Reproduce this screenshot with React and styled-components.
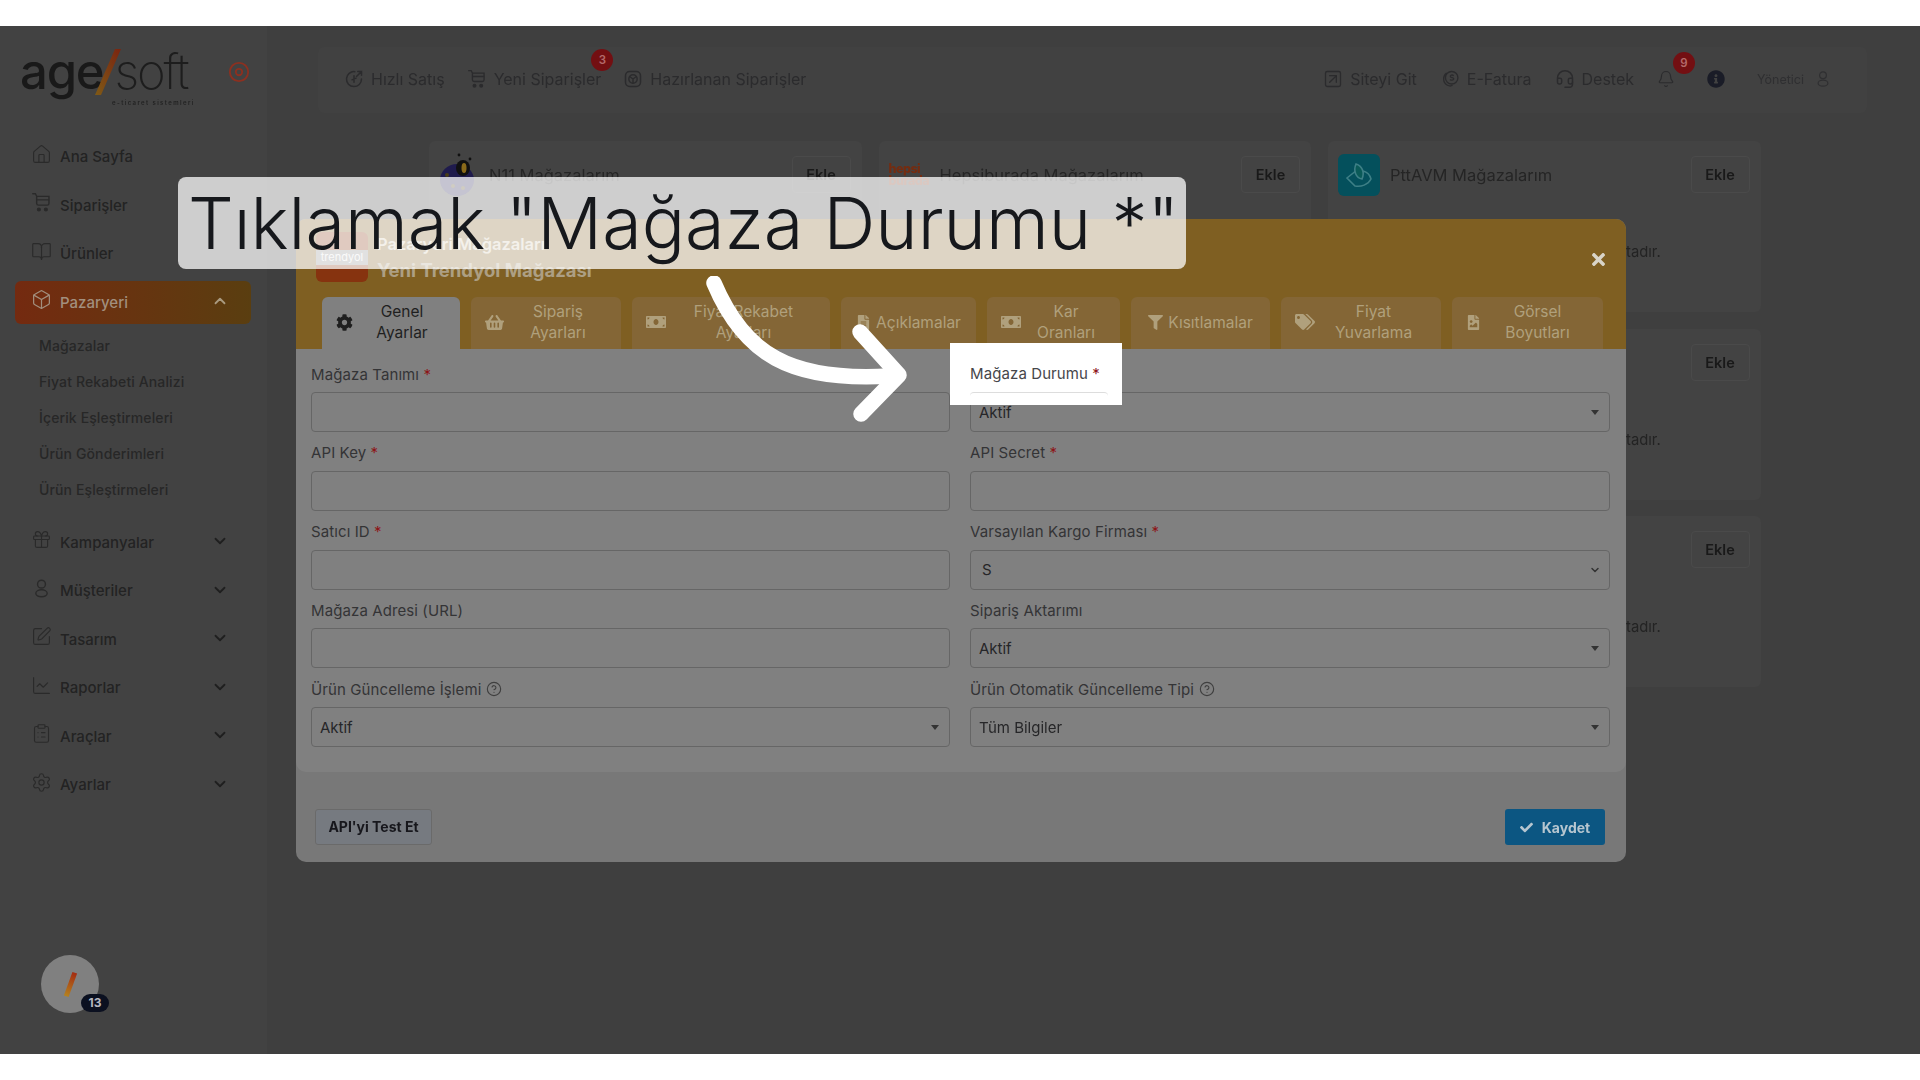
import React from 'react';
import styled, { createGlobalStyle } from 'styled-components';
import {
  House, BookOpen, Box, Gift, SquarePen, ChartLine, ClipboardList, Settings,
  ChevronDown, ChevronUp, SquareArrowUpRight, Headset, Bell, CircleHelp,
} from 'lucide-react';
import {
  FaCog, FaShoppingBasket, FaMoneyBill, FaFileAlt, FaFilter, FaTags,
  FaFileImage, FaCheck, FaTimes, FaInfoCircle,
} from 'react-icons/fa';

const CartIcon = ({ size = 20 }) => (
  <svg width={size} height={size} viewBox="0 0 24 24" fill="none" stroke="currentColor" strokeWidth="1.6" strokeLinecap="round">
    <path d="M2 2h3l1.5 3h14v8a2 2 0 0 1-2 2H8.5a2 2 0 0 1-2-2V5" />
    <path d="M7 9h13" />
    <circle cx="9" cy="20" r="1.6" fill="currentColor" />
    <circle cx="17" cy="20" r="1.6" fill="currentColor" />
  </svg>
);

const QuickIcon = () => (
  <svg width="20" height="20" viewBox="0 0 24 24" fill="none" stroke="currentColor" strokeWidth="1.8" strokeLinecap="round">
    <path d="M13 3.2A9 9 0 1 0 21 12" />
    <path d="M15 9l6-6M16.5 3H21v4.5" />
    <path d="M12 8v8M9.5 13l5-2" />
  </svg>
);

const PreparedIcon = () => (
  <svg width="20" height="20" viewBox="0 0 24 24" fill="none" stroke="currentColor" strokeWidth="1.8">
    <rect x="3" y="3" width="18" height="18" rx="5" />
    <circle cx="12" cy="12" r="5" />
    <path d="M12 12v5M12 12l-4-3M12 12l4-3" />
  </svg>
);

const InvoiceIcon = () => (
  <svg width="20" height="20" viewBox="0 0 24 24" fill="none" stroke="currentColor" strokeWidth="1.6">
    <circle cx="14" cy="10.5" r="7.5" />
    <path d="M8 5a8.5 8.5 0 0 0 1 14.5c2 1 4.500 1 6 0" />
    <path d="M16.500 8c-2-1.500-4.500-.5-4 1.200.5 1.500 4 .8 4 2.600 0 1.700-3 2-4.500.7" />
  </svg>
);

const PersonIcon = ({ size = 20 }) => (
  <svg width={size} height={size} viewBox="0 0 24 24" fill="none" stroke="currentColor" strokeWidth="1.6">
    <circle cx="12" cy="7" r="4.500" />
    <ellipse cx="12" cy="17.500" rx="6.500" ry="4" />
  </svg>
);

const TargetIcon = () => (
  <svg width="22" height="22" viewBox="0 0 24 24" fill="none" stroke="#8c3020" strokeWidth="2">
    <circle cx="12" cy="12" r="10" />
    <circle cx="12" cy="12" r="3.500" />
  </svg>
);

const BugLogo = () => (
  <svg width="40" height="44" viewBox="0 0 40 44">
    <ellipse cx="18" cy="27" rx="17" ry="16" fill="#1f1b4d" />
    <ellipse cx="24" cy="15" rx="7" ry="8" fill="#111" />
    <ellipse cx="25" cy="15" rx="2.500" ry="5" fill="#8a6a1a" />
    <circle cx="20" cy="2" r="1.400" fill="#111" />
    <circle cx="31" cy="6" r="1.400" fill="#111" />
    <circle cx="8" cy="22" r="2" fill="#4a3d16" />
    <circle cx="14" cy="33" r="2" fill="#4a3d16" />
    <circle cx="24" cy="35" r="2" fill="#4a3d16" />
  </svg>
);

const PttLogo = () => (
  <svg width="30" height="26" viewBox="0 0 30 26" fill="none" stroke="#3d7f86" strokeWidth="1.600">
    <path d="M13 8L3 16l8 8c6 1 13-1 16-7-1-4-4-7-8-8" />
    <path d="M12 2c6 2 9 8 6 15-6-1-9-8-6-15z" fill="#0a5a58" />
  </svg>
);

const menuTop = [
  { label: 'Ana Sayfa', icon: <House size={21} strokeWidth={1.3} /> },
  { label: 'Siparişler', icon: <CartIcon size={21} /> },
  { label: 'Ürünler', icon: <BookOpen size={21} strokeWidth={1.3} /> },
];

const subMenu = ['Mağazalar', 'Fiyat Rekabeti Analizi', 'İçerik Eşleştirmeleri', 'Ürün Gönderimleri', 'Ürün Eşleştirmeleri'];

const menuBottom = [
  { label: 'Kampanyalar', icon: <Gift size={21} strokeWidth={1.3} /> },
  { label: 'Müşteriler', icon: <PersonIcon size={21} /> },
  { label: 'Tasarım', icon: <SquarePen size={21} strokeWidth={1.3} /> },
  { label: 'Raporlar', icon: <ChartLine size={21} strokeWidth={1.3} /> },
  { label: 'Araçlar', icon: <ClipboardList size={21} strokeWidth={1.3} /> },
  { label: 'Ayarlar', icon: <Settings size={21} strokeWidth={1.3} /> },
];

const tabs = [
  { lines: ['Genel', 'Ayarlar'], icon: <FaCog size={17} />, width: 138, active: true },
  { lines: ['Sipariş', 'Ayarları'], icon: <FaShoppingBasket size={19} />, width: 150 },
  { lines: ['Fiyat Rekabet', 'Ayarları'], icon: <FaMoneyBill size={20} />, width: 198 },
  { lines: ['Açıklamalar'], icon: <FaFileAlt size={15} />, width: 135 },
  { lines: ['Kar', 'Oranları'], icon: <FaMoneyBill size={20} />, width: 133 },
  { lines: ['Kısıtlamalar'], icon: <FaFilter size={15} />, width: 139 },
  { lines: ['Fiyat', 'Yuvarlama'], icon: <FaTags size={20} />, width: 160 },
  { lines: ['Görsel', 'Boyutları'], icon: <FaFileImage size={15} />, width: 151 },
];

const fields = [
  { label: 'Mağaza Tanımı', required: true },
  { label: 'Mağaza Durumu', required: true, value: 'Aktif' },
  { label: 'API Key', required: true },
  { label: 'API Secret', required: true },
  { label: 'Satıcı ID', required: true },
  { label: 'Varsayılan Kargo Firması', required: true, value: 'S', chevron: true },
  { label: 'Mağaza Adresi (URL)' },
  { label: 'Sipariş Aktarımı', value: 'Aktif' },
  { label: 'Ürün Güncelleme İşlemi', help: true, value: 'Aktif' },
  { label: 'Ürün Otomatik Güncelleme Tipi', help: true, value: 'Tüm Bilgiler' },
];

const App = () => (
  <>
    <GlobalStyle />
    <Page>
      <Band />
      <Screen>
        <Dimmed>
          <Sidebar>
            <LogoRow>
              <Logo>
                <LogoAge>age</LogoAge>
                <LogoSlash viewBox="0 0 26 46" width="26" height="46">
                  <defs>
                    <linearGradient id="slash" x1="1" y1="0" x2="0" y2="1">
                      <stop offset="0" stopColor="#7a2410" />
                      <stop offset="1" stopColor="#7f5a16" />
                    </linearGradient>
                  </defs>
                  <polygon points="20,0 26,0 6,46 0,46" fill="url(#slash)" />
                </LogoSlash>
                <LogoSoft>soft</LogoSoft>
                <LogoTag>e-ticaret sistemleri</LogoTag>
              </Logo>
              <TargetIcon />
            </LogoRow>
            <Menu>
              {menuTop.map((item) => (
                <MenuItem key={item.label}>
                  <MenuIcon>{item.icon}</MenuIcon>
                  <MenuLabel>{item.label}</MenuLabel>
                </MenuItem>
              ))}
              <MenuItem $active>
                <MenuIcon $active><Box size={21} strokeWidth={1.4} /></MenuIcon>
                <MenuLabel>Pazaryeri</MenuLabel>
                <MenuChevron $active><ChevronUp size={18} strokeWidth={2.4} /></MenuChevron>
              </MenuItem>
              <SubMenu>
                {subMenu.map((item) => <SubItem key={item}>{item}</SubItem>)}
              </SubMenu>
              {menuBottom.map((item) => (
                <MenuItem key={item.label}>
                  <MenuIcon>{item.icon}</MenuIcon>
                  <MenuLabel>{item.label}</MenuLabel>
                  <MenuChevron><ChevronDown size={18} strokeWidth={2.4} /></MenuChevron>
                </MenuItem>
              ))}
            </Menu>
          </Sidebar>

          <Main>
            <TopBar>
              <BarGroup>
                <BarLink><QuickIcon />Hızlı Satış</BarLink>
                <BarLink>
                  <CartIcon />Yeni Siparişler
                  <CountBadge $top={-20} $right={-12}>3</CountBadge>
                </BarLink>
                <BarLink><PreparedIcon />Hazırlanan Siparişler</BarLink>
              </BarGroup>
              <BarGroup>
                <BarLink><SquareArrowUpRight size={20} strokeWidth={1.6} />Siteyi Git</BarLink>
                <BarLink><InvoiceIcon />E-Fatura</BarLink>
                <BarLink><Headset size={20} strokeWidth={1.8} />Destek</BarLink>
                <BellWrap>
                  <Bell size={18} strokeWidth={1.6} />
                  <CountBadge $top={-18} $right={-20}>9</CountBadge>
                </BellWrap>
                <InfoWrap><FaInfoCircle size={18} /></InfoWrap>
                <UserBox>Yönetici <PersonIcon size={18} /></UserBox>
              </BarGroup>
            </TopBar>

            <CardGrid>
              <Card>
                <CardHead>
                  <BugLogo />
                  <CardTitle>N11 Mağazalarım</CardTitle>
                  <AddButton>Ekle</AddButton>
                </CardHead>
              </Card>
              <Card>
                <CardHead>
                  <HepsiLogo>hepsi<br />burada</HepsiLogo>
                  <CardTitle>Hepsiburada Mağazalarım</CardTitle>
                  <AddButton>Ekle</AddButton>
                </CardHead>
              </Card>
              <Card>
                <CardHead>
                  <PttBox><PttLogo /></PttBox>
                  <CardTitle>PttAVM Mağazalarım</CardTitle>
                  <AddButton>Ekle</AddButton>
                </CardHead>
                <CardNote>Henüz mağaza bulunmamaktadır.</CardNote>
              </Card>
              <Card />
              <Card />
              <Card>
                <CardHead>
                  <CardTitle />
                  <AddButton>Ekle</AddButton>
                </CardHead>
                <CardNote>Henüz mağaza bulunmamaktadır.</CardNote>
              </Card>
              <Card />
              <Card />
              <Card>
                <CardHead>
                  <CardTitle />
                  <AddButton>Ekle</AddButton>
                </CardHead>
                <CardNote>Henüz mağaza bulunmamaktadır.</CardNote>
              </Card>
            </CardGrid>
          </Main>

          <Widget>
            <WidgetSlash />
            <WidgetBadge>13</WidgetBadge>
          </Widget>

          <Modal>
            <ModalHeader>
              <TitleRow>
                <BrandBox><BrandStrip>trendyol</BrandStrip></BrandBox>
                <div>
                  <TitleSmall>Pazaryeri Mağazaları</TitleSmall>
                  <TitleBig>Yeni Trendyol Mağazası</TitleBig>
                </div>
              </TitleRow>
              <CloseButton><FaTimes size={19} /></CloseButton>
              <TabRow>
                {tabs.map((tab) => (
                  <Tab key={tab.lines[0]} $width={tab.width} $active={tab.active} $wide={tab.lines.length > 1}>
                    {tab.icon}
                    <TabText $wide={tab.lines.length > 1}>
                      {tab.lines.map((line) => <div key={line}>{line}</div>)}
                    </TabText>
                  </Tab>
                ))}
              </TabRow>
            </ModalHeader>

            <ModalBody>
              {fields.map((field) => (
                <Field key={field.label}>
                  <FieldLabel>
                    {field.label}
                    {field.required && <Star> *</Star>}
                    {field.help && <HelpMark><CircleHelp size={16} strokeWidth={1.7} /></HelpMark>}
                  </FieldLabel>
                  {field.value ? (
                    <SelectBox>
                      <SelectValue $indent={field.chevron}>{field.value}</SelectValue>
                      {field.chevron ? <ChevronDown size={12} strokeWidth={3} /> : <Caret />}
                    </SelectBox>
                  ) : (
                    <TextInput readOnly />
                  )}
                </Field>
              ))}
            </ModalBody>

            <ModalFooter>
              <TestButton>API'yi Test Et</TestButton>
              <SaveButton><FaCheck size={13} />Kaydet</SaveButton>
            </ModalFooter>
          </Modal>
        </Dimmed>

        <Callout>Tıklamak "Mağaza Durumu *"</Callout>

        <Spotlight>
          <SpotLabel>Mağaza Durumu<Star> *</Star></SpotLabel>
          <SpotEdge />
        </Spotlight>

        <ArrowMark viewBox="0 0 220 180" width="220" height="180">
          <path d="M14 7 C 44 78, 90 106, 190 100" />
          <path d="M160 56 L 199 99 L 161 138" />
        </ArrowMark>
      </Screen>
      <Band />
    </Page>
  </>
);

const GlobalStyle = createGlobalStyle`
  html, body {
    margin: 0;
    padding: 0;
    background: #fff;
  }
  * {
    box-sizing: border-box;
  }
`;

const Page = styled.div`
  width: 1920px;
  height: 1080px;
  display: flex;
  flex-direction: column;
  overflow: hidden;
  font-family: Inter, "Noto Sans", sans-serif;
`;

const Band = styled.div`
  height: 26px;
  flex-shrink: 0;
  background: #fff;
`;

const Screen = styled.div`
  position: relative;
  flex: 1;
  overflow: hidden;
  background: #3f3f3f;
`;

const Dimmed = styled.div`
  display: flex;
  height: 100%;
  filter: blur(0.55px);
`;

const Sidebar = styled.aside`
  width: 267px;
  flex-shrink: 0;
  background: #424242;
`;

const LogoRow = styled.div`
  display: flex;
  align-items: center;
  justify-content: space-between;
  height: 109px;
  padding: 0 17px 18px 20px;
  color: #111;
`;

const Logo = styled.div`
  position: relative;
  display: flex;
  align-items: baseline;
  height: 60px;
`;

const LogoAge = styled.span`
  font-size: 49px;
  font-weight: 500;
  letter-spacing: -1.2px;
  color: #191919;
`;

const LogoSlash = styled.svg`
  margin: 0 -7px 0 -8px;
  align-self: center;
`;

const LogoSoft = styled.span`
  font-size: 49px;
  font-weight: 200;
  letter-spacing: -2.2px;
  color: #1d1d1d;
`;

const LogoTag = styled.span`
  position: absolute;
  left: 92px;
  bottom: -4px;
  font-size: 6px;
  font-weight: 600;
  letter-spacing: 1.4px;
  color: #222;
  white-space: nowrap;
`;

const Menu = styled.nav`
  display: flex;
  flex-direction: column;
`;

const MenuItem = styled.div`
  display: flex;
  align-items: center;
  height: 43px;
  margin: 0 16px 5.5px 15px;
  padding: 0 22px 0 16px;
  border-radius: 6px;
  color: ${(props) => (props.$active ? '#a28f7e' : '#232323')};
  background: ${(props) => (props.$active ? 'linear-gradient(90deg, #742a10, #5a3e10)' : 'none')};
`;

const MenuIcon = styled.span`
  display: flex;
  width: 29px;
  margin-top: -5px;
  color: ${(props) => (props.$active ? '#a28f7e' : '#2a2a2a')};
`;

const MenuLabel = styled.span`
  flex: 1;
  font-size: 15px;
  font-weight: 500;
`;

const MenuChevron = styled.span`
  display: flex;
  margin-top: -2px;
  color: ${(props) => (props.$active ? '#a99a80' : '#1f1f1f')};
`;

const SubMenu = styled.div`
  display: flex;
  flex-direction: column;
  margin: -1.500px 0 13px;
`;

const SubItem = styled.div`
  height: 36px;
  line-height: 36px;
  padding-left: 39px;
  font-size: 14px;
  letter-spacing: 0.12px;
  font-weight: 500;
  color: #272727;
`;

const Main = styled.main`
  flex: 1;
  display: flex;
  flex-direction: column;
  padding: 21px 53px 0 51px;
`;

const TopBar = styled.header`
  display: flex;
  align-items: center;
  justify-content: space-between;
  height: 66px;
  padding: 0 35px 2px 26px;
  background: #414141;
  border-radius: 6px;
`;

const BarGroup = styled.div`
  display: flex;
  align-items: center;
  gap: 22px;

  & + & {
    gap: 23px;
  }
`;

const BarLink = styled.span`
  position: relative;
  display: flex;
  align-items: center;
  gap: 7px;
  font-size: 16px;
  color: #2b2b2d;
`;

const CountBadge = styled.span`
  position: absolute;
  top: ${(props) => props.$top}px;
  right: ${(props) => props.$right}px;
  width: 22px;
  height: 22px;
  line-height: 22px;
  text-align: center;
  border-radius: 50%;
  font-size: 11.500px;
  font-weight: 600;
  color: #b36a6a;
  background: #730f12;
`;

const BellWrap = styled.span`
  position: relative;
  display: flex;
  color: #2b2b2d;
`;

const InfoWrap = styled.span`
  display: flex;
  margin-left: 9px;
  color: #1a1c27;
`;

const UserBox = styled.span`
  display: flex;
  align-items: center;
  gap: 10px;
  margin-left: 9px;
  font-size: 12.500px;
  color: #2f2f31;
`;

const CardGrid = styled.div`
  display: grid;
  grid-template-columns: repeat(3, 432.500px);
  grid-auto-rows: 171px;
  gap: 16.500px 17px;
  margin: 28px 0 0 111px;
`;

const Card = styled.section`
  background: #434343;
  border-radius: 6px;
`;

const CardHead = styled.div`
  display: flex;
  align-items: center;
  gap: 10px;
  height: 65px;
  padding: 2px 11px 0 10px;
`;

const CardTitle = styled.span`
  flex: 1;
  font-size: 16.500px;
  color: #252525;
`;

const AddButton = styled.span`
  width: 59px;
  height: 37px;
  line-height: 35px;
  text-align: center;
  border: 1px solid #4a4a4a;
  border-radius: 4px;
  font-size: 14.500px;
  font-weight: 600;
  color: #191919;
`;

const HepsiLogo = styled.span`
  width: 41px;
  font-size: 12.500px;
  font-weight: 800;
  line-height: 12px;
  letter-spacing: -0.5px;
  color: #752c10;
`;

const PttBox = styled.span`
  display: flex;
  align-items: center;
  justify-content: center;
  width: 42px;
  height: 42px;
  border-radius: 6px;
  background: #04505c;
`;

const CardNote = styled.p`
  margin: 37px 0 0;
  text-align: center;
  font-size: 14.800px;
  color: #232323;
`;

const Widget = styled.div`
  position: absolute;
  left: 41px;
  bottom: 41px;
  width: 58px;
  height: 58px;
  display: flex;
  align-items: center;
  justify-content: center;
  border-radius: 50%;
  background: #808080;
`;

const WidgetSlash = styled.span`
  width: 5px;
  height: 25px;
  transform: rotate(20deg);
  background: linear-gradient(180deg, #a32c12, #b5821f);
`;

const WidgetBadge = styled.span`
  position: absolute;
  left: 40px;
  bottom: 1px;
  width: 28px;
  height: 18px;
  line-height: 18px;
  text-align: center;
  border-radius: 9px;
  font-size: 12px;
  font-weight: 700;
  color: #b5b8c0;
  background: #0b1020;
`;

const Modal = styled.div`
  position: absolute;
  left: 296px;
  top: 193px;
  width: 1330px;
  height: 643px;
  display: flex;
  flex-direction: column;
  border-radius: 10px;
  overflow: hidden;
  background: #787878;
`;

const ModalHeader = styled.div`
  position: relative;
  height: 130px;
  padding-top: 13px;
  background: #7f5f22;
`;

const TitleRow = styled.div`
  display: flex;
  gap: 9px;
  height: 50px;
  padding-left: 20px;
`;

const BrandBox = styled.div`
  width: 52px;
  height: 50px;
  padding-top: 18px;
  border-radius: 6px;
  background: #86330f;
`;

const BrandStrip = styled.div`
  height: 15px;
  line-height: 15px;
  text-align: center;
  font-size: 11px;
  color: #ececec;
  background: #8b8b8b;
`;

const TitleSmall = styled.div`
  font-size: 16.500px;
  font-weight: 600;
  line-height: 24px;
  color: #f0ece2;
  opacity: 0.75;
`;

const TitleBig = styled.div`
  font-size: 18.500px;
  font-weight: 700;
  line-height: 28px;
  color: #ad9f84;
`;

const CloseButton = styled.span`
  position: absolute;
  top: 31px;
  right: 18px;
  display: flex;
  color: #d9d4c8;
`;

const TabRow = styled.div`
  display: flex;
  gap: 11px;
  height: 52px;
  margin-top: 15px;
  padding-left: 26px;
`;

const Tab = styled.div`
  display: flex;
  align-items: center;
  justify-content: center;
  gap: ${(props) => (props.$wide ? 10 : 5)}px;
  width: ${(props) => props.$width}px;
  padding: ${(props) => (props.$wide ? '0 19px 2px 14px' : '0 6px 2px')};
  border-radius: 6px 6px 0 0;
  font-size: 15.500px;
  line-height: 21px;
  text-align: center;
  color: ${(props) => (props.$active ? '#1f1f1f' : '#b0a07c')};
  background: ${(props) => (props.$active ? '#808080' : '#846636')};
`;

const TabText = styled.div`
  flex: ${(props) => (props.$wide ? 1 : 'none')};
`;

const ModalBody = styled.div`
  display: grid;
  grid-template-columns: 639px 640px;
  column-gap: 20px;
  grid-auto-rows: 78.800px;
  align-content: start;
  height: 423px;
  padding: 15px 16px 0 15px;
  border-radius: 0 0 10px 10px;
  background: #808080;
`;

const Field = styled.div`
  display: flex;
  flex-direction: column;
`;

const FieldLabel = styled.label`
  display: flex;
  align-items: center;
  height: 20px;
  margin-bottom: 8px;
  white-space: pre;
  font-size: 15px;
  letter-spacing: 0.1px;
  color: #343436;
`;

const Star = styled.span`
  color: #8d1518;
`;

const HelpMark = styled.span`
  display: flex;
  margin-left: 5px;
  color: #3f3f3f;
`;

const TextInput = styled.input`
  height: 40px;
  border: 1px solid #666;
  border-radius: 4px;
  background: #808080;
`;

const SelectBox = styled.div`
  display: flex;
  align-items: center;
  justify-content: space-between;
  height: 40px;
  padding: 0 8px;
  border: 1px solid #666;
  border-radius: 4px;
  color: #333;
`;

const SelectValue = styled.span`
  padding-left: ${(props) => (props.$indent ? 3 : 0)}px;
  font-size: 15px;
  color: #262628;
`;

const Caret = styled.span`
  width: 0;
  height: 0;
  margin-right: 2px;
  border-left: 4px solid transparent;
  border-right: 4px solid transparent;
  border-top: 5.500px solid #333;
`;

const ModalFooter = styled.div`
  flex: 1;
  display: flex;
  align-items: center;
  justify-content: space-between;
  padding: 20px 21px 0 19px;
`;

const TestButton = styled.span`
  width: 117px;
  height: 36px;
  line-height: 34px;
  text-align: center;
  border: 1px solid #6a6a6a;
  border-radius: 3px;
  font-size: 14px;
  font-weight: 700;
  color: #17171c;
  background: #767a80;
`;

const SaveButton = styled.span`
  display: flex;
  align-items: center;
  justify-content: center;
  gap: 9px;
  width: 100px;
  height: 36px;
  border-radius: 3px;
  font-size: 14px;
  font-weight: 700;
  color: #b6c6d0;
  background: #0c5682;
`;

const Callout = styled.div`
  position: absolute;
  left: 178px;
  top: 151px;
  width: 1008px;
  height: 92px;
  padding-left: 10px;
  line-height: 92px;
  border-radius: 8px;
  white-space: nowrap;
  font-size: 72px;
  font-weight: 300;
  color: #16181c;
  background: rgba(255, 255, 255, 0.74);
`;

const Spotlight = styled.div`
  position: absolute;
  left: 950px;
  top: 317px;
  width: 172px;
  height: 62px;
  padding: 21px 14px 0 20px;
  background: #fff;
`;

const SpotLabel = styled.div`
  height: 20px;
  line-height: 20px;
  white-space: pre;
  font-size: 15px;
  letter-spacing: 0.1px;
  color: #46464a;
`;

const SpotEdge = styled.div`
  height: 5px;
  margin-top: 8px;
  border-top: 1px solid #ddd;
  border-radius: 4px 4px 0 0;
`;

const ArrowMark = styled.svg`
  position: absolute;
  left: 700px;
  top: 250px;
  fill: none;
  stroke: #fff;
  stroke-width: 15.500;
  stroke-linecap: round;
  stroke-linejoin: round;
`;

export default App;
